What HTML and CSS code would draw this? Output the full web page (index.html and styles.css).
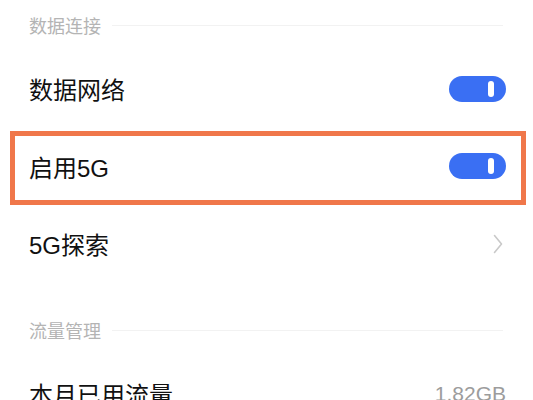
FILE: index.html
```html
<!DOCTYPE html>
<html lang="zh-CN">
<head>
    <meta charset="UTF-8">
    <meta name="viewport" content="width=device-width, initial-scale=1.0">
    <title>移动网络</title>
    <link rel="stylesheet" href="styles.css">
</head>
<body>
    <div class="settings">
        <div class="section">
            <div class="section-title">
                <span>数据连接</span>
                <span class="section-line"></span>
            </div>

            <div class="row">
                <span class="row-label">数据网络</span>
                <span class="switch on"><span class="knob"></span></span>
            </div>

            <!-- highlighted row -->
            <div class="row highlight">
                <span class="row-label">启用5G</span>
                <span class="switch on"><span class="knob"></span></span>
            </div>

            <div class="row">
                <span class="row-label">5G探索</span>
                <svg class="chevron" width="10" height="20" viewBox="0 0 10 20">
                    <path d="M1.5 1.5 L8.5 10 L1.5 18.5" fill="none" stroke="#c9c9c9" stroke-width="1.6" stroke-linecap="round" stroke-linejoin="round"/>
                </svg>
            </div>
        </div>

        <div class="section">
            <div class="section-title">
                <span>流量管理</span>
                <span class="section-line"></span>
            </div>

            <div class="row">
                <span class="row-label">本月已用流量</span>
                <span class="row-value">1.82GB</span>
            </div>
        </div>
    </div>
</body>
</html>
```

FILE: styles.css
```css
body {
    margin: 0;
    padding: 0;
    background-color: #fff;
    font-family: "Liberation Sans", "Noto Sans CJK SC", sans-serif;
    color: #111;
    overflow: hidden;
}

.settings {
    padding: 0 27px 0 29px;
}

.section + .section {
    margin-top: 23px;
}

.section-title {
    height: 50px;
    display: flex;
    align-items: center;
    font-size: 18px;
    color: #b4b4b4;
}

.section-line {
    flex: 1;
    height: 1px;
    margin-left: 11px;
    margin-right: 3px;
    background-color: #f2f2f2;
}

.row {
    height: 77px;
    display: flex;
    align-items: center;
    justify-content: space-between;
}

.row-label {
    font-size: 24px;
}

.row-value {
    font-size: 21px;
    color: #9c9c9c;
}

.highlight {
    position: relative;
    height: 78px;
}

.highlight::after {
    content: "";
    position: absolute;
    top: 4px;
    bottom: 0;
    left: -19px;
    right: -20px;
    border: 5px solid #f0774a;
}

.switch {
    width: 57px;
    height: 26px;
    border-radius: 13px;
    background-color: #ccc;
    position: relative;
}

.switch.on {
    background-color: #3a6ff3;
}

.switch .knob {
    position: absolute;
    top: 5px;
    left: 39px;
    width: 6px;
    height: 16px;
    border-radius: 3px;
    background-color: #fff;
}

.chevron {
    margin-right: 3px;
}
```
